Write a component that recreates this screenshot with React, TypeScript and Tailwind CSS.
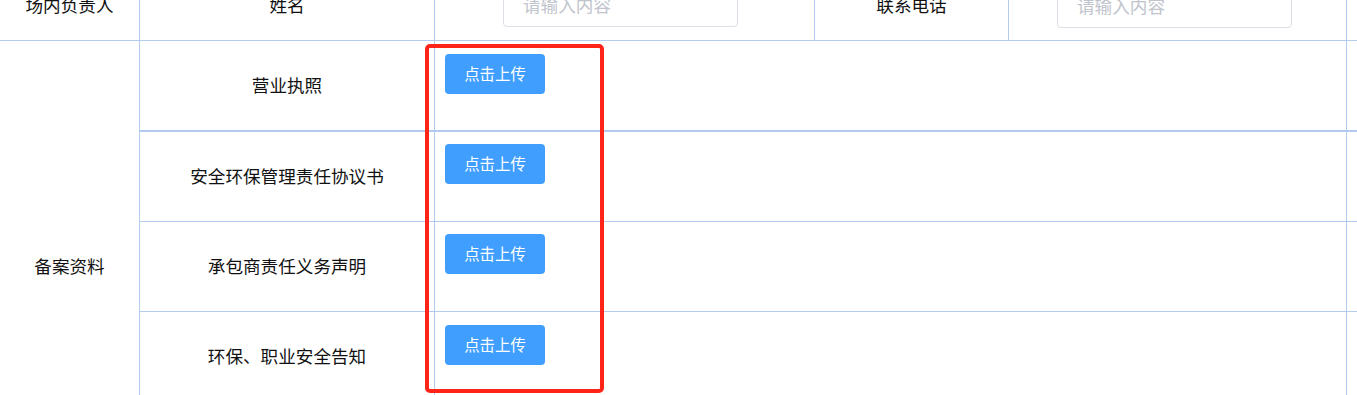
import React from "react";

const B = "border-[#b3cbee]";

function UploadButton() {
  return (
    <button
      type="button"
      className="w-[100px] h-[40px] rounded-[4px] bg-[#409eff] text-white text-[15.4px] leading-none flex items-center justify-center"
    >
      点击上传
    </button>
  );
}

function Input({ className }: { className: string }) {
  return (
    <div
      className={
        "w-[235px] h-[44px] rounded-[4px] border border-[#dcdfe6] bg-white flex items-center pl-[19px] text-[17.6px] text-[#c0c4cc] " +
        className
      }
    >
      请输入内容
    </div>
  );
}

const rows: { label: string; h: string; bw: string; pt: string }[] = [
  { label: "营业执照", h: "h-[91px]", bw: "border-b-2", pt: "pt-[13px]" },
  { label: "安全环保管理责任协议书", h: "h-[90px]", bw: "border-b", pt: "pt-[12px]" },
  { label: "承包商责任义务声明", h: "h-[90px]", bw: "border-b", pt: "pt-[12px]" },
  { label: "环保、职业安全告知", h: "h-[90px]", bw: "border-b", pt: "pt-[13px]" },
  { label: "", h: "h-[90px]", bw: "border-b", pt: "pt-[13px]" },
];

export default function App() {
  return (
    <div
      className="relative w-[1357px] h-[395px] overflow-hidden bg-white text-[#111] text-[17.6px]"
      style={{ fontFamily: '"Microsoft YaHei", "Noto Sans CJK SC", "Noto Sans", sans-serif' }}
    >
      <div className="flex flex-col -mt-[29px]">
        {/* header row */}
        <div className={`flex h-[70px] border-b ${B}`}>
          <div className={`w-[140px] shrink-0 border-r ${B} flex items-center justify-center`}>
            场内负责人
          </div>
          <div className={`w-[295px] shrink-0 border-r ${B} flex items-center justify-center`}>
            姓名
          </div>
          <div className={`w-[380px] shrink-0 border-r ${B} flex items-center pl-[68px]`}>
            <Input className="mt-[-1px]" />
          </div>
          <div className={`w-[194px] shrink-0 border-r ${B} flex items-center justify-center`}>
            联系电话
          </div>
          <div className={`w-[338px] shrink-0 border-r ${B} flex items-center pl-[48px]`}>
            <Input className="mt-[1px]" />
          </div>
          <div className="flex-1" />
        </div>

        {/* body */}
        <div className="flex">
          <div className={`w-[140px] shrink-0 border-r ${B} flex items-center justify-center`}>
            备案资料
          </div>
          <div className="flex-1 flex flex-col">
            {rows.map((r, i) => (
              <div key={i} className={`flex ${r.h} ${r.bw} ${B}`}>
                <div className={`w-[295px] shrink-0 border-r ${B} flex items-center justify-center`}>
                  {r.label}
                </div>
                <div className={`w-[912px] shrink-0 border-r ${B} pl-[10px] ${r.pt}`}>
                  <UploadButton />
                </div>
                <div className="flex-1" />
              </div>
            ))}
          </div>
        </div>
      </div>

      {/* red annotation box */}
      <div className="absolute left-[425px] top-[44px] w-[179px] h-[349px] border-[4px] border-[#ff2418] rounded-[5px] pointer-events-none" />
    </div>
  );
}
